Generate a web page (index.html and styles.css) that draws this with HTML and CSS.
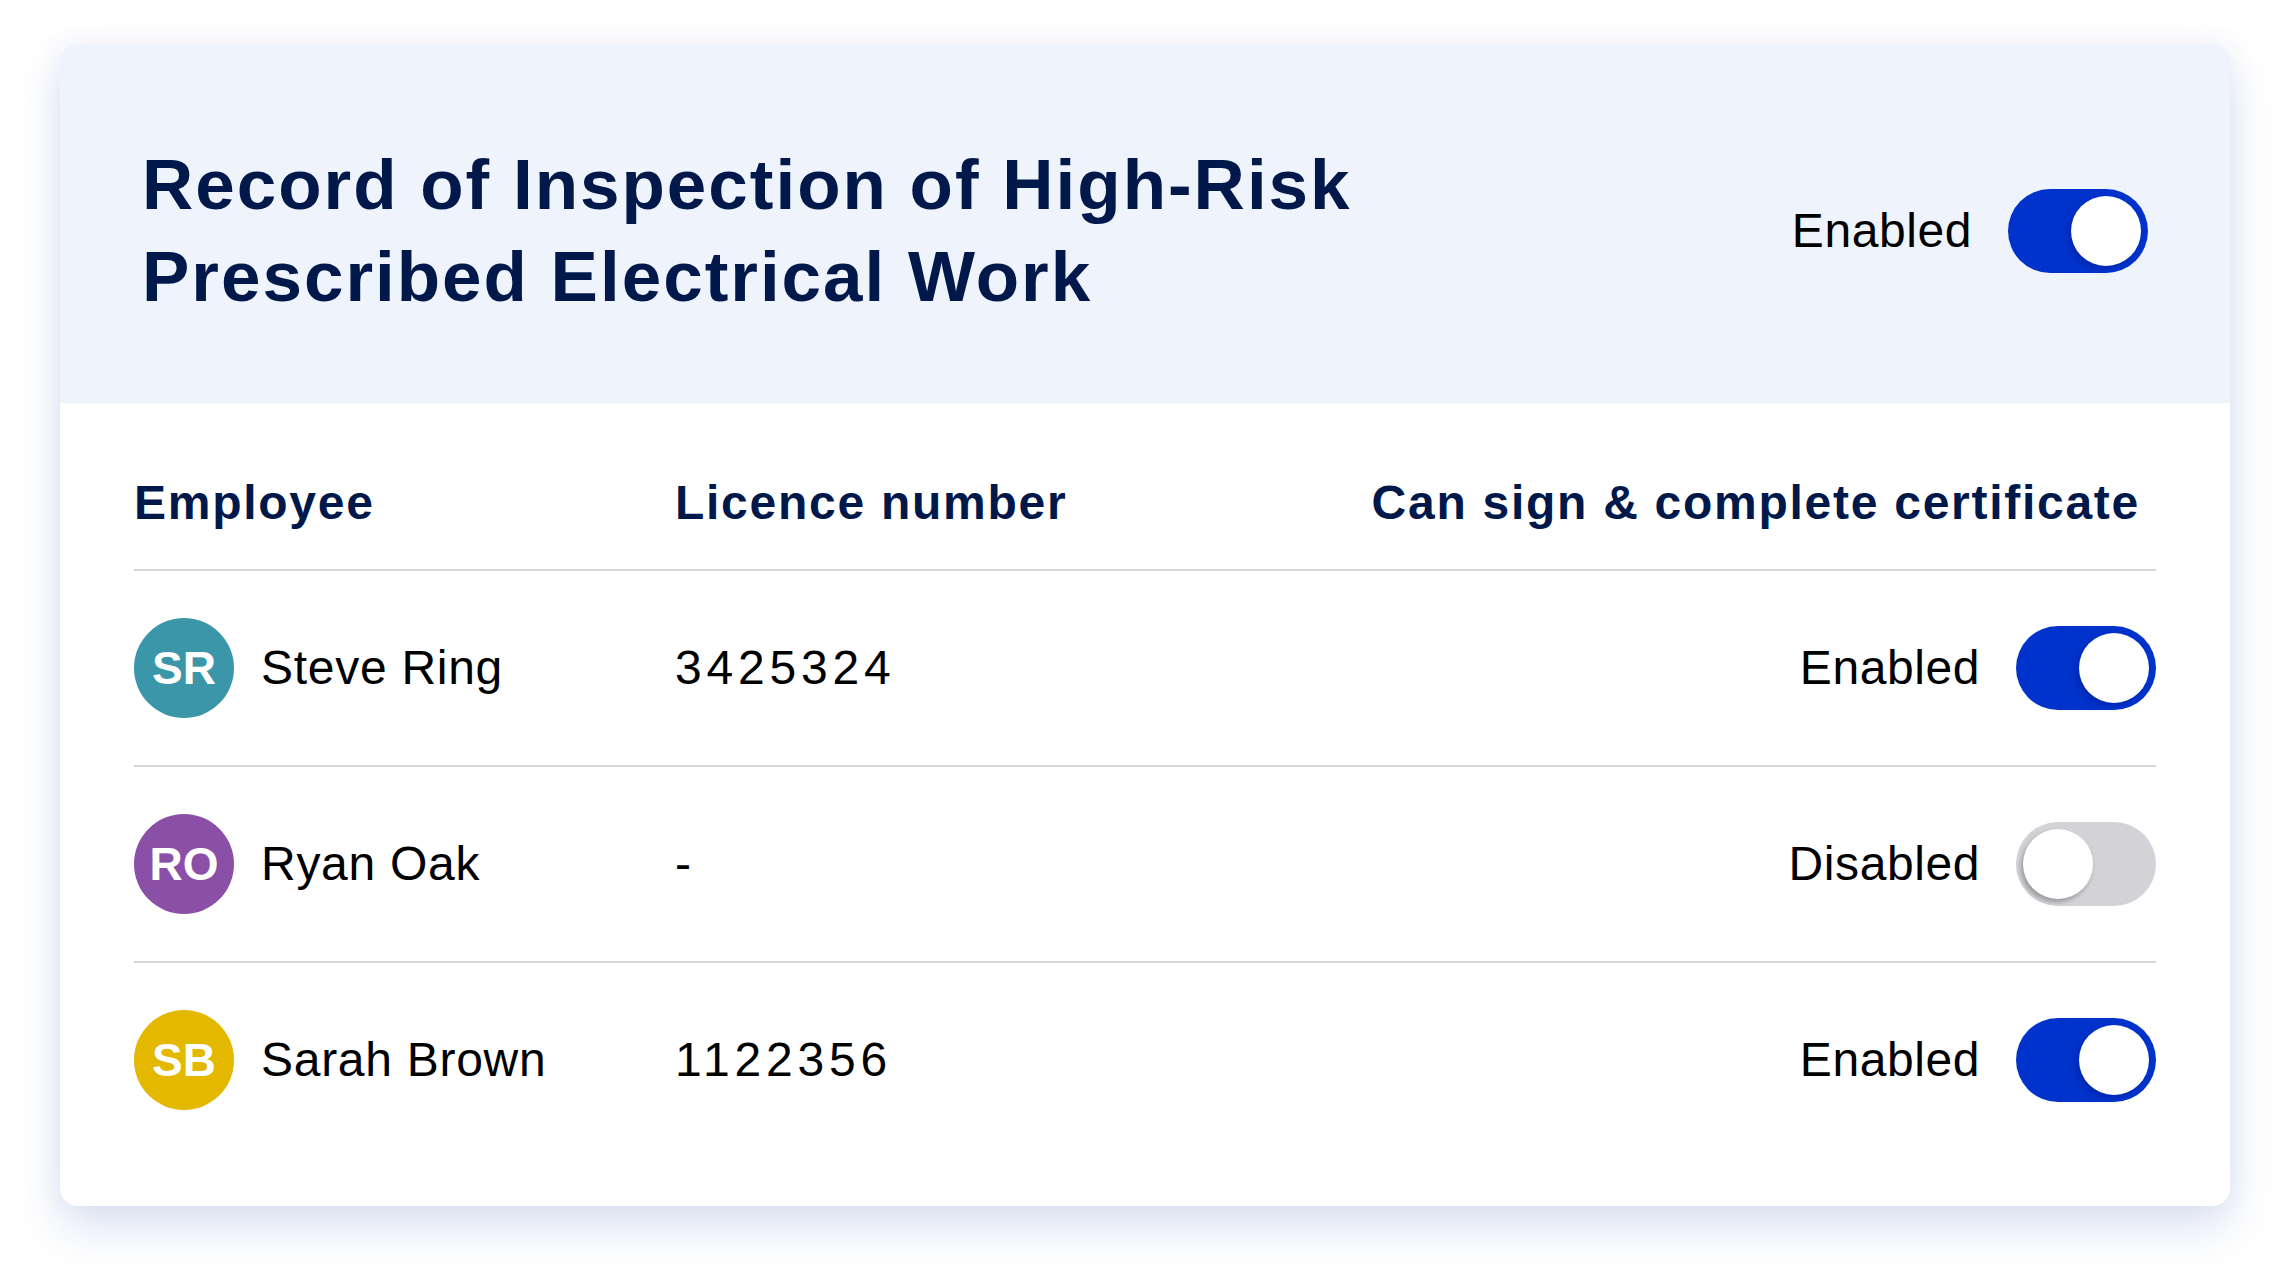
FILE: index.html
```html
<!DOCTYPE html>
<html lang="en">
<head>
  <meta charset="UTF-8">
  <title>Record of Inspection of High-Risk Prescribed Electrical Work</title>
  <link rel="stylesheet" href="styles.css">
</head>
<body>

  <div class="page">
    <div class="card">

      <div class="card-head">
        <h1 class="title">Record of Inspection of High-Risk Prescribed Electrical Work</h1>
        <div class="switch-group">
          <span class="switch-label">Enabled</span>
          <span class="switch on"><span class="knob"></span></span>
        </div>
      </div>

      <div class="table">
        <div class="row head">
          <div class="cell">Employee</div>
          <div class="cell">Licence number</div>
          <div class="cell right pad-end">Can sign &amp; complete certificate</div>
        </div>

        <div class="row">
          <div class="cell person">
            <span class="avatar teal">SR</span>
            <span class="name">Steve Ring</span>
          </div>
          <div class="cell licence">3425324</div>
          <div class="cell right">
            <div class="switch-group">
              <span class="switch-label">Enabled</span>
              <span class="switch on"><span class="knob"></span></span>
            </div>
          </div>
        </div>

        <div class="row">
          <div class="cell person">
            <span class="avatar purple">RO</span>
            <span class="name">Ryan Oak</span>
          </div>
          <div class="cell licence">-</div>
          <div class="cell right">
            <div class="switch-group">
              <span class="switch-label">Disabled</span>
              <span class="switch off"><span class="knob"></span></span>
            </div>
          </div>
        </div>

        <div class="row">
          <div class="cell person">
            <span class="avatar yellow">SB</span>
            <span class="name">Sarah Brown</span>
          </div>
          <div class="cell licence">1122356</div>
          <div class="cell right">
            <div class="switch-group">
              <span class="switch-label">Enabled</span>
              <span class="switch on"><span class="knob"></span></span>
            </div>
          </div>
        </div>
      </div>

    </div>
  </div>

</body>
</html>
```

FILE: styles.css
```css
html, body {
  margin: 0;
  padding: 0;
  background-color: white;
  font-family: "Liberation Sans", Arial, sans-serif;
  color: #000;
}

.page {
  padding: 44px 60px 78px 60px;
}

.card {
  width: 2170px;
  height: 1162px;
  box-sizing: border-box;
  background-color: white;
  border-radius: 18px;
  overflow: hidden;
  box-shadow: 0 22px 46px rgba(30, 70, 165, 0.15), 0 0 30px rgba(30, 70, 165, 0.06);
}

/* header band */
.card-head {
  height: 359px;
  box-sizing: border-box;
  padding: 95px 82px 80px 82px;
  background-color: #eff3fb;
  display: flex;
  justify-content: space-between;
  align-items: center;
}

.title {
  margin: 0;
  max-width: 1300px;
  font-size: 71px;
  line-height: 92px;
  font-weight: bold;
  letter-spacing: 0.028em;
  color: #00184a;
}

/* toggle */
.switch-group {
  display: flex;
  align-items: center;
  gap: 36px;
}

.switch-label {
  font-size: 48px;
  line-height: 48px;
  letter-spacing: 0.012em;
}

.switch {
  display: flex;
  align-items: center;
  width: 140px;
  height: 84px;
  box-sizing: border-box;
  padding: 7px;
  border-radius: 42px;
}

.switch .knob {
  width: 70px;
  height: 70px;
  border-radius: 50%;
  background-color: white;
}

.switch.on {
  background-color: #0033cc;
  justify-content: flex-end;
}

.switch.on .knob {
  box-shadow: -3px 3px 6px rgba(0, 20, 120, 0.35);
}

.switch.off {
  background-color: #d2d2d7;
  justify-content: flex-start;
}

.switch.off .knob {
  box-shadow: -2px 3px 5px rgba(0, 0, 0, 0.28);
}

/* table */
.table {
  padding: 0 74px;
}

.row {
  display: grid;
  grid-template-columns: 541px 1fr auto;
  align-items: center;
  height: 196px;
  box-sizing: border-box;
  border-bottom: 2px solid #d4d4d9;
}

.row:last-child {
  border-bottom: none;
  height: 194px;
}

.row.head {
  height: 168px;
  padding-top: 76px;
  padding-bottom: 42px;
  align-items: start;
}

.cell {
  font-size: 48px;
  line-height: 48px;
}

.head .cell {
  font-weight: bold;
  letter-spacing: 0.036em;
  color: #00184a;
}

.right {
  justify-self: end;
}

.pad-end {
  padding-right: 16px;
}

.person {
  display: flex;
  align-items: center;
  gap: 27px;
}

.name {
  letter-spacing: 0.015em;
}

.avatar {
  width: 100px;
  height: 100px;
  border-radius: 50%;
  display: flex;
  align-items: center;
  justify-content: center;
  color: white;
  font-size: 46px;
  font-weight: bold;
}

.teal { background-color: #3a96a8; }
.purple { background-color: #8a4fa6; }
.yellow { background-color: #e5b800; }

.licence {
  letter-spacing: 0.1em;
}
```
